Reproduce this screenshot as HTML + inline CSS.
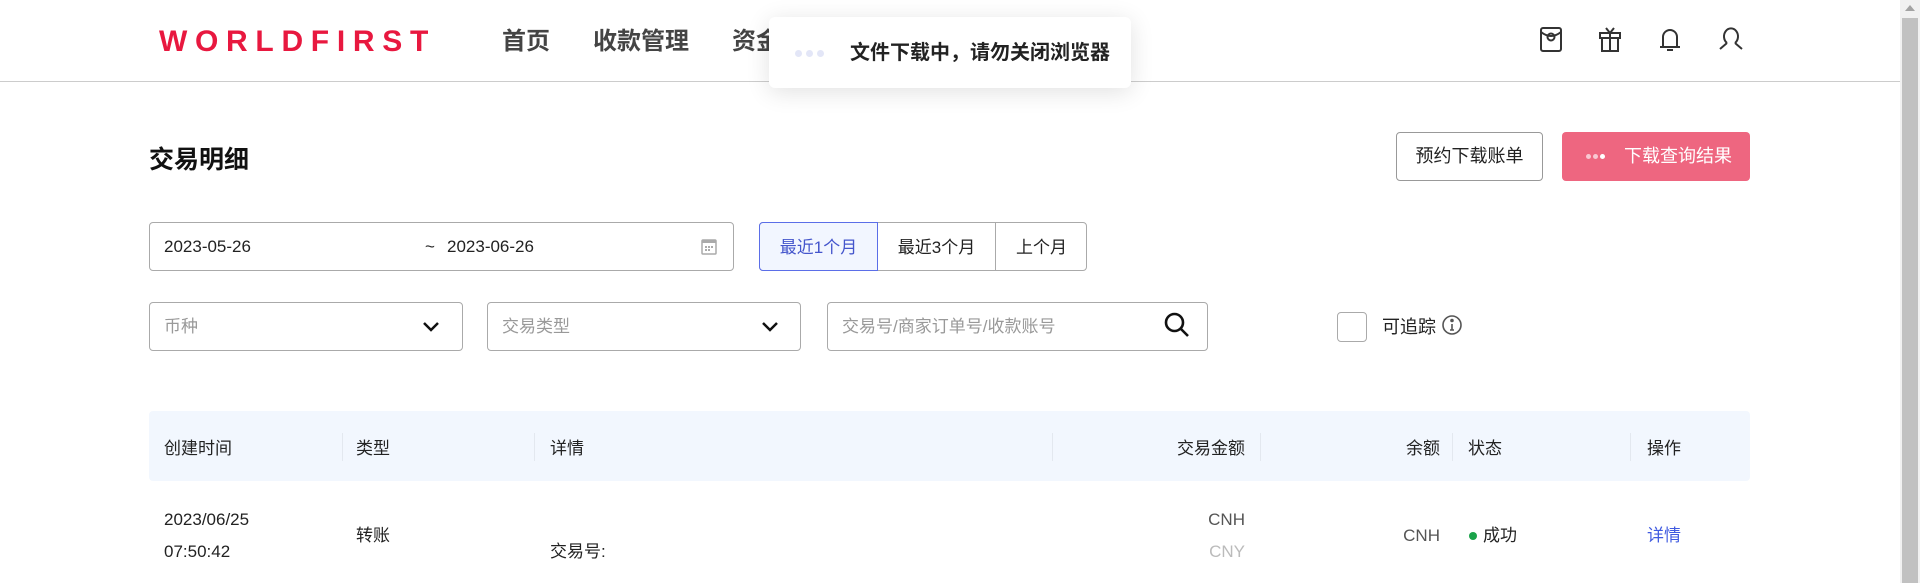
<!DOCTYPE html>
<html><head><meta charset="utf-8"><style>
*{margin:0;padding:0;box-sizing:border-box}
body{width:1920px;height:583px;overflow:hidden;background:#fff;font-family:"Liberation Sans","Noto Sans CJK SC",sans-serif;color:#222;position:relative}
.a{position:absolute}
.box{position:absolute;border:1px solid #aaa;border-radius:4px;background:#fff}
.t16{font-size:17px;line-height:22px}
.sep{position:absolute;top:433px;width:1px;height:28px;background:#e3e8ef}
</style></head><body>
<div class="a" style="left:159px;top:25px;font-size:30px;font-weight:bold;color:#e8183f;letter-spacing:7.7px;line-height:34px">WORLDFIRST</div>
<div class="a" style="left:502px;top:26px;font-size:24px;font-weight:bold;color:#444;line-height:32px">首页</div>
<div class="a" style="left:593px;top:26px;font-size:24px;font-weight:bold;color:#444;line-height:32px">收款管理</div>
<div class="a" style="left:732px;top:26px;font-size:24px;font-weight:bold;color:#444;line-height:32px">资金</div>
<div class="a" style="left:0;top:81px;width:1900px;height:1px;background:#ccc"></div>
<svg class="a" style="left:1538px;top:26px" width="26" height="28" viewBox="0 0 26 28" fill="none" stroke="#333" stroke-width="2"><rect x="3" y="2" width="20" height="23" rx="2"/><path d="M3 6 Q13 14 23 6"/><circle cx="13" cy="11" r="3.5"/></svg>
<svg class="a" style="left:1597px;top:26px" width="26" height="28" viewBox="0 0 26 28" fill="none" stroke="#333" stroke-width="2"><rect x="3" y="7" width="20" height="5"/><rect x="5" y="12" width="16" height="13"/><path d="M13 7V25M9 2l4 5 4-5"/></svg>
<svg class="a" style="left:1657px;top:26px" width="26" height="28" viewBox="0 0 26 28" fill="none" stroke="#333" stroke-width="2"><path d="M6 20V11a7 7 0 0 1 14 0v9M3 21h20M10 24h6"/></svg>
<svg class="a" style="left:1717px;top:26px" width="28" height="28" viewBox="0 0 28 28" fill="none" stroke="#333" stroke-width="2"><path d="M10 17a7 8 0 1 1 8 0M10 17l-7 6M18 17l7 6"/></svg>
<div class="a" style="left:769px;top:17px;width:362px;height:71px;background:#fff;border-radius:6px;box-shadow:0 4px 24px rgba(0,0,0,.12)"></div>
<div class="a" style="left:795px;top:50px;width:7px;height:7px;border-radius:50%;background:#e3e6f7;box-shadow:11px 0 0 #e3e6f7,22px 0 0 #e3e6f7"></div>
<div class="a" style="left:850px;top:41px;font-size:20px;font-weight:bold;color:#222;line-height:24px">文件下载中，请勿关闭浏览器</div>
<div class="a" style="left:149px;top:144px;font-size:25px;font-weight:bold;line-height:32px;color:#111">交易明细</div>
<div class="box" style="left:1396px;top:132px;width:147px;height:49px;border-color:#999;text-align:center;line-height:47px;font-size:18px">预约下载账单</div>
<div class="a" style="left:1562px;top:132px;width:188px;height:49px;background:#ee6680;border-radius:4px;color:#fff;font-size:18px;line-height:49px"><span style="position:absolute;left:24px;top:22px;width:5px;height:5px;border-radius:50%;background:#f8c8d2;box-shadow:7px 0 0 #f8c8d2,14px 0 0 #fff"></span><span style="position:absolute;left:62px">下载查询结果</span></div>
<div class="box" style="left:149px;top:222px;width:585px;height:49px"></div>
<div class="a t16" style="left:164px;top:236px">2023-05-26</div>
<div class="a t16" style="left:425px;top:236px">~</div>
<div class="a t16" style="left:447px;top:236px">2023-06-26</div>
<svg class="a" style="left:701px;top:237px" width="16" height="18" viewBox="0 0 16 18" fill="#aaa"><rect x="1" y="3" width="14" height="14" rx="1" fill="none" stroke="#aaa" stroke-width="1.5"/><rect x="1" y="3" width="14" height="3"/><rect x="4" y="9" width="2" height="2"/><rect x="7" y="9" width="2" height="2"/><rect x="10" y="9" width="2" height="2"/><rect x="4" y="12" width="2" height="2"/><rect x="7" y="12" width="2" height="2"/></svg>
<div class="box" style="left:759px;top:222px;width:328px;height:49px"></div>
<div class="a" style="left:759px;top:222px;width:119px;height:49px;border:1px solid #5b6ee8;border-radius:4px 0 0 4px;background:#f2f6ff;color:#4455cc;text-align:center;line-height:49px;font-size:17px">最近1个月</div>
<div class="a" style="left:878px;top:222px;width:118px;height:49px;border-right:1px solid #aaa;text-align:center;line-height:51px;font-size:17px">最近3个月</div>
<div class="a" style="left:996px;top:222px;width:91px;height:49px;text-align:center;line-height:51px;font-size:17px">上个月</div>
<div class="box" style="left:149px;top:302px;width:314px;height:49px"></div>
<div class="a t16" style="left:164px;top:316px;color:#999">币种</div>
<svg class="a" style="left:421px;top:320px" width="20" height="14" viewBox="0 0 20 14" fill="none" stroke="#111" stroke-width="2.5"><path d="M3 3l7 7 7-7"/></svg>
<div class="box" style="left:487px;top:302px;width:314px;height:49px"></div>
<div class="a t16" style="left:502px;top:316px;color:#999">交易类型</div>
<svg class="a" style="left:760px;top:320px" width="20" height="14" viewBox="0 0 20 14" fill="none" stroke="#111" stroke-width="2.5"><path d="M3 3l7 7 7-7"/></svg>
<div class="box" style="left:827px;top:302px;width:381px;height:49px"></div>
<div class="a t16" style="left:842px;top:316px;color:#999">交易号/商家订单号/收款账号</div>
<svg class="a" style="left:1162px;top:310px" width="30" height="30" viewBox="0 0 30 30" fill="none" stroke="#111" stroke-width="2.6"><circle cx="12.5" cy="12.5" r="8.5"/><path d="M19 19l7 7"/></svg>
<div class="box" style="left:1337px;top:312px;width:30px;height:30px;border-color:#aaa"></div>
<div class="a" style="left:1382px;top:316px;font-size:18px;line-height:22px">可追踪</div>
<svg class="a" style="left:1441px;top:314px" width="22" height="22" viewBox="0 0 22 22" fill="none" stroke="#555" stroke-width="1.6"><circle cx="11" cy="11" r="9"/><path d="M11 10v6M9 16h4"/><circle cx="11" cy="6.5" r="1" fill="#555"/></svg>
<div class="a" style="left:149px;top:411px;width:1601px;height:70px;background:#f2f7fe;border-radius:4px"></div>
<div class="sep" style="left:342px"></div><div class="sep" style="left:534px"></div><div class="sep" style="left:1052px"></div><div class="sep" style="left:1260px"></div><div class="sep" style="left:1452px"></div><div class="sep" style="left:1630px"></div>
<div class="a t16" style="left:164px;top:438px">创建时间</div>
<div class="a t16" style="left:356px;top:438px">类型</div>
<div class="a t16" style="left:550px;top:438px">详情</div>
<div class="a t16" style="left:1145px;top:438px;width:100px;text-align:right">交易金额</div>
<div class="a t16" style="left:1340px;top:438px;width:100px;text-align:right">余额</div>
<div class="a t16" style="left:1468px;top:438px">状态</div>
<div class="a t16" style="left:1647px;top:438px">操作</div>
<div class="a t16" style="left:164px;top:509px">2023/06/25</div>
<div class="a t16" style="left:164px;top:541px">07:50:42</div>
<div class="a t16" style="left:356px;top:525px">转账</div>
<div class="a t16" style="left:550px;top:541px">交易号:</div>
<div class="a t16" style="left:1145px;top:509px;width:100px;text-align:right;color:#555">CNH</div>
<div class="a t16" style="left:1145px;top:541px;width:100px;text-align:right;color:#bbb">CNY</div>
<div class="a t16" style="left:1340px;top:525px;width:100px;text-align:right;color:#555">CNH</div>
<div class="a" style="left:1469px;top:532px;width:8px;height:8px;border-radius:50%;background:#1aa34a"></div>
<div class="a t16" style="left:1483px;top:525px">成功</div>
<div class="a t16" style="left:1647px;top:525px;color:#3f5ae0">详情</div>
<div class="a" style="left:1900px;top:0;width:20px;height:583px;background:#f1f1f1"></div>
<div class="a" style="left:1902px;top:18px;width:16px;height:565px;background:#c1c1c1"></div>
<div class="a" style="left:1905px;top:5px;width:0;height:0;border-left:5px solid transparent;border-right:5px solid transparent;border-bottom:6px solid #a3a3a3"></div>
</body></html>
